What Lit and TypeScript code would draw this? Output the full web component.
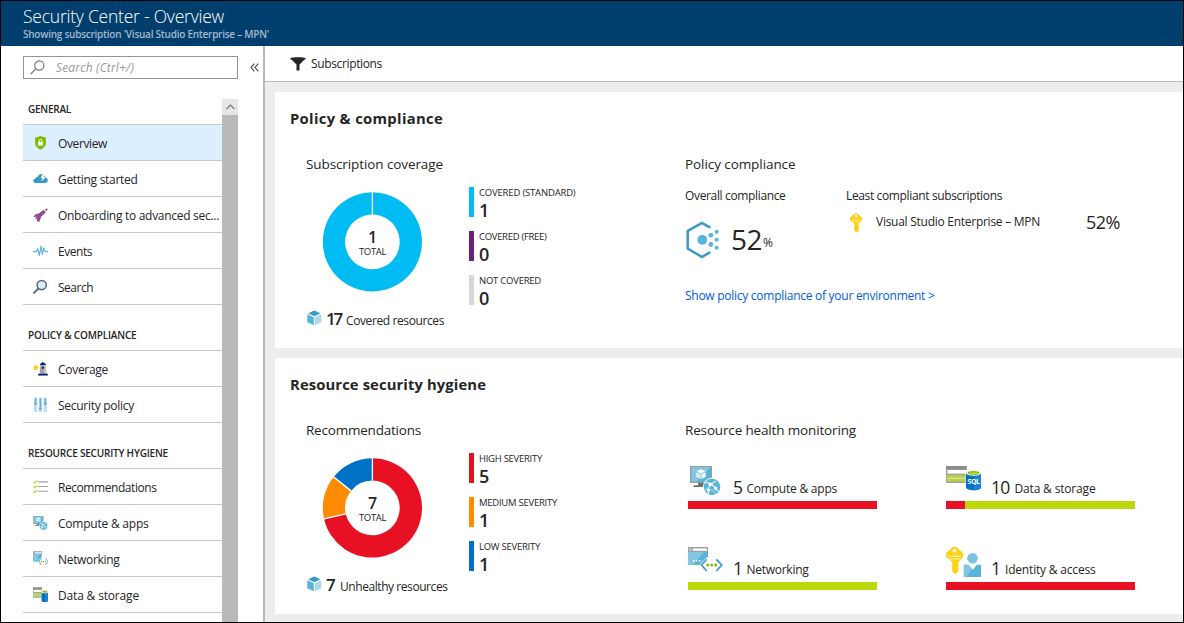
import { LitElement, html, svg, css, nothing } from "lit";
import { customElement, property } from "lit/decorators.js";

/** Single-line label whose tracking adapts to a given measure. */
@customElement("fit-label")
class FitLabel extends LitElement {
  @property({ type: Number }) w = 0;
  @property() text = "";
  static styles = css`
    :host { display: inline-block; white-space: pre; }
  `;
  render() {
    return html`<span>${this.text}</span>`;
  }
  updated() {
    const s = this.renderRoot.querySelector("span") as HTMLElement;
    s.style.letterSpacing = "0px";
    const natural = s.getBoundingClientRect().width;
    if (this.w && this.text.length) {
      s.style.letterSpacing = `${(this.w - natural) / this.text.length}px`;
    }
  }
}

const fit = (text: string, w: number) => html`<fit-label .text=${text} .w=${w}></fit-label>`;

const monitorArt = svg`
  <path d="M1 1h22v17H1z" fill="#9b9c9e"/>
  <path d="M2.3 2h19.5v14.6H2.3z" fill="#59b4d9"/>
  <path d="M2.3 2h19.5L8 16.6H2.3z" fill="#84c6e1"/>
  <path d="M9 18h6v2.2h3.5V22H4.5v-1.8H9z" fill="#6f7072"/>
  <path d="M12 4.3l4.6 2-4.6 2-4.6-2z" fill="#fff"/>
  <path d="M7.200 7.200l4.400 1.900v4.800l-4.400-2z" fill="#d3ecf6"/>
  <path d="M16.800 7.200l-4.400 1.900v4.800l4.400-2z" fill="#eaf6fb"/>
  <circle cx="23" cy="22" r="9.200" fill="#fff"/>
  <circle cx="23" cy="22" r="8.300" fill="#59b4d9"/>
  <path d="M16.500 17.500c4 0 9 3.500 12.500 9M19.500 29c-1.500-5 1-10 7.500-13" fill="none" stroke="#fff" stroke-width="1.200"/>
  <path d="M15.500 24.500c4-1 8 0 11.500 4.500" fill="none" stroke="#d3ecf6" stroke-width=".8"/>
  <circle cx="21.300" cy="19.300" r="1.900" fill="#fff"/><circle cx="26.700" cy="23.300" r="1.700" fill="#fff"/><circle cx="19.500" cy="25" r="1.500" fill="#fff"/>`;

const networkArt = svg`
  <path d="M0 0h20v18H0z" fill="#59b4d9"/>
  <path d="M0 0h20L5 18H0z" fill="#84c6e1"/>
  <path d="M0 0h20v5H0z" fill="#9b9c9e"/>
  <path d="M5 1.400h14v2.400H5z" fill="#fff"/>
  <circle cx="2.400" cy="2.500" r="1.300" fill="#59b4d9" stroke="#fff" stroke-width=".5"/>
  <path d="M5 13h1.500v1.500H5zM8 13h1.500v1.500H8zM11 13h1.500v1.500H11z" fill="#fff"/>
  <path d="M18.500 10.500l-7 7.500 7 8h9l7-8-7-7.500z" fill="#fff"/>
  <path d="M18.700 12.300L13.500 18l5.200 6M28.300 12.300L33.800 18l-5.500 6" fill="none" stroke="#3999c6" stroke-width="1.700"/>
  <circle cx="19.700" cy="18" r="1.500" fill="#7fba00"/><circle cx="23.700" cy="18" r="1.500" fill="#7fba00"/><circle cx="27.700" cy="18" r="1.500" fill="#7fba00"/>`;

const dataArt = svg`
  <path d="M0 0h21v17H0z" fill="#a0a1a2"/>
  <path d="M0 0h21l-3 3.500H0z" fill="#8b8c8d"/>
  <path d="M1.500 4h19v3.600h-19z" fill="#fff"/>
  <path d="M1 9h18v2.500H1zM1 13h18v2.500H1z" fill="#b8d432"/>
  <path d="M1 11.500h18V13H1z" fill="#d8e3a0"/>
  <path d="M19.500 4.500h16V24h-16z" fill="#fff"/>
  <path d="M20 7v14.500c0 1.600 3.300 2.700 7.500 2.700s7.500-1.100 7.500-2.700V7z" fill="#0072c6"/>
  <path d="M28 9v15.200c4 0 7-1.100 7-2.700V7z" fill="#1b82d0"/>
  <ellipse cx="27.500" cy="7" rx="7.500" ry="2.700" fill="#fff"/>
  <ellipse cx="27.500" cy="6.800" rx="6" ry="1.900" fill="#7fba00"/>
  <ellipse cx="27.500" cy="7.400" rx="4.500" ry="1.200" fill="#b8d432"/>`;

const keyArt = svg`
  <path d="M4.600.4h2.800L12 4.500v3L8.700 11v6.500L6.500 19.600 4.300 17.600V11L0 7.500v-3z" fill="#fcd116"/>
  <path d="M1.500 7h9M1.500 8.800h9" stroke="#fff0a8" stroke-width=".8"/>
  <circle cx="6" cy="3" r="1.300" fill="#fff"/>`;

const icons: Record<string, unknown> = {
  shield: svg`<svg class="i16" viewBox="0 0 16 16"><path d="M8 .3c1.800 1.300 3.800 1.700 5.700 1.700v6.500c0 3-2.400 5-5.700 6.700-3.300-1.700-5.700-3.700-5.700-6.700V2C4.200 2 6.200 1.600 8 .3z" fill="#7fba00"/><path d="M5.500 6.800h5v4h-5z" fill="#fff"/><path d="M6.500 7V5.700a1.500 1.500 0 013 0V7" fill="none" stroke="#fff" stroke-width="1"/></svg>`,
  cloud: svg`<svg class="i16" viewBox="0 0 16 16"><path d="M3 12.300c-1.700 0-2.700-1.100-2.700-2.400 0-1.400 1-2.400 2.400-2.500C3 6 4.200 5.600 5 5.800 5.600 3.800 7.200 2.600 9 2.600c2.400 0 4 1.600 4.200 3.900 1.600.2 2.600 1.400 2.600 2.900 0 1.700-1.200 2.900-2.900 2.900z" fill="#3999c6"/><path d="M10 2.800h3L11.500 6h2L9 10.700l1.100-3.400H8.300z" fill="#fff"/></svg>`,
  rocket: svg`<svg class="i16" viewBox="0 0 16 16"><path d="M15.700 1l-3.200.8 2.300 2.400zM11.500 2.500L6 6.500l-3.500.7L.3 10l3.200-.2L2 12.500l2.300-.4.3 2.500 2.200-.4 2.300-4.900L13.800 5z" fill="#914c94"/><path d="M11.600 2.600l2.200 2.200" stroke="#fff" stroke-width=".5"/><path d="M3.800 13.500l2.800-3 1.400 1-1.600 4.200z" fill="#914c94"/></svg>`,
  pulse: svg`<svg class="i16" viewBox="0 0 16 16"><path d="M0 8.700h3.500L5 5.500l1.700 7.500L8.500 2.700l1.300 9 1.700-7 1.300 4H16" fill="none" stroke="#59b4d9" stroke-width="1.200" stroke-linejoin="round"/></svg>`,
  search: svg`<svg class="i16" viewBox="0 0 16 16"><path d="M5.800 9.600L1 14.200" stroke="#5a6675" stroke-width="2" stroke-linecap="round"/><circle cx="9.300" cy="5.900" r="4.900" fill="#d9eef8" stroke="#5a6675" stroke-width="1.600"/></svg>`,
  tower: svg`<svg class="i16" viewBox="0 0 16 16"><path d="M8 3.500h5.200L14.300 13H7z" fill="#a0a1a2"/><path d="M11.500 3.500h1.700L14.300 13h-2.600z" fill="#c4c5c6"/><path d="M7.200 3.700c.3-1 1.200-2 2.500-2.300L10.500.3l.9 1.100c1.200.3 2.300 1.300 2.500 2.300z" fill="#0a2f7a"/><path d="M5.500 13h10.300v2H5.500z" fill="#002d6e"/><circle cx="10.600" cy="6.700" r="1.300" fill="#333"/><circle cx="2.800" cy="6.600" r="2.500" fill="#fcd116"/><path d="M3 5l3.800 1.600L3 8.200z" fill="#fcd116"/></svg>`,
  sliders: svg`<svg class="i16" viewBox="0 0 16 16"><path d="M1 0h3.500v15.500H1zM6.200 0h3.500v15.500H6.200zM11.300 0h3.500v15.500h-3.500z" fill="#b8def0"/><path d="M2 1h1.600v5H2zM7.200 1h1.600v10H7.200zM12.300 1h1.600v5h-1.600z" fill="#59b4d9"/><path d="M1 6h3.500v1.400H1zM6.200 11.500h3.500v1.400H6.200zM11.300 6h3.500v1.400h-3.500z" fill="#8a9299"/></svg>`,
  checks: svg`<svg class="i16" viewBox="0 0 16 16"><path d="M5 2.500h11M5 7.500h11M5 12.500h11" stroke="#a0a1a2" stroke-width="1.200"/><path d="M.5 2.500l1.200 1.200L4.500 1M.5 7.500l1.200 1.200L4.500 6M.5 12.500l1.200 1.200L4.500 11" fill="none" stroke="#b8d432" stroke-width="1.200"/></svg>`,
  compute: svg`<svg class="i16" viewBox="0.500 0 32 32">${monitorArt}</svg>`,
  network: svg`<svg class="i16" viewBox="0 0 32 32"><g transform="scale(.94 1.180)">${networkArt}</g></svg>`,
  data: svg`<svg class="i16" viewBox="0 0 32 32"><g transform="scale(.91 1.280)">${dataArt}</g></svg>`,
  cube: svg`<svg class="i16" viewBox="0 0 16 16"><path d="M7.800 0l6.500 3-6.500 3.100L1.300 3z" fill="#3999c6"/><path d="M.3 4l7 3.300v8.500l-7-3.400z" fill="#59b4d9"/><path d="M15.300 4l-7 3.300v8.500l7-3.400z" fill="#a9d8ec"/></svg>`,
};

const tileIcons: Record<string, unknown> = {
  compute: svg`<svg width="36" height="33" viewBox="-1 0 36 33">${monitorArt}</svg>`,
  network: svg`<svg width="36" height="33" viewBox="0 -1 36 33">${networkArt}</svg>`,
  data: svg`<svg width="36" height="33" viewBox="0 -1 36 33">${dataArt}<text class="sql" x="21.500" y="17.600" textLength="12.500">SQL</text></svg>`,
  identity: svg`<svg width="36" height="33" viewBox="0 -1 36 33"><g transform="translate(.2 -.5) scale(1.400 1.420)">${keyArt}</g><circle cx="26.500" cy="11.300" r="5.300" fill="#7ac3e3"/><path d="M24 15.800c3 1.500 6.300 0 7.300-2a5.300 5.300 0 01-7.300 2z" fill="#59b4d9"/><path d="M17.800 17.800h4.700l4.300 5 4-5H35V30H17.800z" fill="#59b4d9"/><path d="M17.800 17.800h4.700l3.300 4-5.500 8.200h-2.500z" fill="#84c6e1"/></svg>`,
};

const nav = [
  { title: "GENERAL", w: 43, items: [
    ["shield", "Overview", 49], ["cloud", "Getting started", 79.500], ["rocket", "Onboarding to advanced sec...", 161],
    ["pulse", "Events", 34], ["search", "Search", 35]] },
  { title: "POLICY & COMPLIANCE", w: 108.500, items: [["tower", "Coverage", 50], ["sliders", "Security policy", 76]] },
  { title: "RESOURCE SECURITY HYGIENE", w: 140, items: [
    ["checks", "Recommendations", 98.500], ["compute", "Compute & apps", 90.500], ["network", "Networking", 61.500], ["data", "Data & storage", 81]] },
] as { title: string; w: number; items: [string, string, number][] }[];

type Slice = { label: string; w: number; value: number; color: string };
const coverage: Slice[] = [
  { label: "COVERED (STANDARD)", w: 96.500, value: 1, color: "#00bcf2" },
  { label: "COVERED (FREE)", w: 67.500, value: 0, color: "#68217a" },
  { label: "NOT COVERED", w: 62, value: 0, color: "#d6d7d8" },
];
const severity: Slice[] = [
  { label: "HIGH SEVERITY", w: 63, value: 5, color: "#e81123" },
  { label: "MEDIUM SEVERITY", w: 78, value: 1, color: "#ff8c00" },
  { label: "LOW SEVERITY", w: 61, value: 1, color: "#0072c6" },
];
const tiles = [
  { icon: "compute", n: "5", nw: 9.500, gap: 4, label: "Compute & apps", w: 90.500, bad: 100 },
  { icon: "data", n: "10", nw: 18.500, gap: 5, label: "Data & storage", w: 81, bad: 10 },
  { icon: "network", n: "1", nw: 9.500, gap: 4, label: "Networking", w: 62, bad: 0 },
  { icon: "identity", n: "1", nw: 9.500, gap: 4.500, label: "Identity & access", w: 90.500, bad: 100 },
];

@customElement("app-root")
class AppRoot extends LitElement {
  static styles = css`
    :host {
      display: block; box-sizing: border-box; width: 1184px; height: 623px; overflow: hidden;
      border: 1px solid #000; background: #fff; color: #252525;
      font: 12px/18px "Open Sans", "Noto Sans", sans-serif;
    }
    * { box-sizing: border-box; }
    svg { display: block; flex: none; }
    h1, h2, h3, h4, p { margin: 0; font-weight: 400; }
    .page { display: flex; flex-direction: column; height: 100%; }
    header { flex: none; height: 45px; background: #003e6e; padding: 4px 0 0 22px; color: #fff; }
    .title { font-size: 17.500px; font-weight: 300; line-height: 23px; }
    .sub { font-size: 10px; font-weight: 600; line-height: 12px; color: #a6b9cb; }
    .body { flex: 1; min-height: 0; display: flex; }
    aside { flex: none; width: 264px; border-right: 2px solid #bababa; padding: 10px 0 0 22px; display: flex; flex-direction: column; }
    .find { display: flex; align-items: center; height: 23px; flex: none; }
    .box { width: 215px; height: 23px; border: 1px solid #949494; display: flex; align-items: center; padding-left: 6px; gap: 11px; color: #999; font-style: italic; }
    .fold { margin-left: 12px; }
    .scroll { flex: 1; min-height: 0; margin-top: 20px; display: flex; width: 215px; overflow: hidden; }
    nav { width: 199px; flex: none; }
    .group { height: 26px; border-bottom: 1px solid #c8c8c8; padding-left: 5px; font-size: 10px; font-weight: 600; line-height: 21px; }
    .group:not(:first-child) { margin-top: 20px; }
    .item { height: 36px; border-bottom: 1px solid #c8c8c8; display: flex; align-items: center; padding: 2px 0 0 10px; gap: 10px; }
    .item.on { background: #dceffe; }
    .item .i16 { margin-top: -2px; }
    .i16 { width: 15px; height: 16px; }
    .bar { width: 16px; background: #b9b9b9; }
    .up { height: 16px; background: #e6e6e6; display: flex; align-items: center; justify-content: center; }
    main { flex: 1; min-width: 0; background: #ededed; display: flex; flex-direction: column; }
    .tools { flex: none; height: 36px; background: #fff; border-bottom: 1px solid #bababa; display: flex; align-items: center; padding-left: 25px; gap: 5px; }
    .cards { padding: 10px 0 0 10px; display: grid; gap: 10px; }
    .card { height: 256px; background: #fff; padding: 16px 0 0 15px; }
    h2 { font-size: 14.800px; font-weight: 700; line-height: 20px; }
    .cols { display: grid; grid-template-columns: 379px 1fr; padding: 26px 0 0 16px; }
    h3 { font-size: 13.500px; line-height: 20px; }
    .chart { display: flex; padding: 13px 0 0 16px; }
    .donut { margin-top: 5px; width: 100px; height: 100px; display: grid; }
    .donut > * { grid-area: 1 / 1; }
    .total { display: flex; flex-direction: column; align-items: center; padding: 36px 0 0 1px; }
    .total b { font-size: 16px; font-weight: 600; line-height: 18px; }
    .total span { font-size: 9.500px; line-height: 12px; }
    .legend { margin-left: 47px; display: grid; gap: 14px; }
    .key { height: 30px; border-left: 5px solid; padding-left: 5px; }
    .key div { color: #252525; font-size: 9.500px; line-height: 11px; }
    .key b { display: block; color: #252525; font-size: 18px; font-weight: 600; line-height: 24px; }
    .res { display: flex; padding: 4px 0 0 1px; height: 24px; }
    .res .i16 { margin-top: 1px; }
    .res b { font-size: 17px; font-weight: 600; line-height: 20px; margin: 0 5px 0 4px; }
    .res span { line-height: 24px; }
    .pol { display: grid; grid-template-columns: 161px 1fr; padding-top: 13px; height: 113px; }
    .overall { display: flex; padding: 16px 0 0 1px; }
    .overall b { font-size: 28px; font-weight: 400; line-height: 36px; margin-left: 11px; }
    .overall span { font-size: 12px; line-height: 44px; margin-left: 1px; }
    .least { display: flex; padding: 8px 0 0 4px; align-items: flex-start; }
    .least p { margin-left: 14px; width: 210px; }
    .least b { font-size: 18px; font-weight: 400; line-height: 18px; }
    .link { color: #015cda; }
    .tiles { display: grid; grid-template-columns: 189px 189px; column-gap: 69px; row-gap: 36px; padding: 24px 0 0 3px; }
    .tile { height: 45px; display: flex; flex-direction: column; justify-content: space-between; }
    .top { display: flex; height: 34px; }
    .top svg { margin-top: 1px; }
    .n { font-size: 17.500px; line-height: 47px; margin-left: 9px; }
    .l { line-height: 49px; }
    .meter { height: 8px; background: #bad80a; }
    .meter div { height: 8px; background: #e81123; }
    .sql { font: 700 7px "Open Sans", sans-serif; fill: #fff; }
  `;

  donut(slices: Slice[]) {
    const total = slices.reduce((a, s) => a + s.value, 0);
    const cx = 50.400, cy = 49.900, R = 49.600, r = 27.300;
    const pt = (rad: number, t: number) =>
      `${cx + rad * Math.sin(t * 2 * Math.PI)} ${cy - rad * Math.cos(t * 2 * Math.PI)}`;
    let acc = 0;
    const edges: number[] = [];
    const arcs = slices.filter((s) => s.value).map((s) => {
      const a = acc / total;
      acc += s.value;
      const b = Math.min(acc / total, a + 0.99999);
      const big = b - a > 0.5 ? 1 : 0;
      edges.push(a);
      return svg`<path fill=${s.color} d="M${pt(R, a)}A${R} ${R} 0 ${big} 1 ${pt(R, b)}L${pt(r, b)}A${r} ${r} 0 ${big} 0 ${pt(r, a)}Z"/>`;
    });
    return html`<div class="donut">
      <svg width="100" height="100">${arcs}${edges.map((e) => svg`<path d="M${pt(r, e)}L${pt(R + 1, e)}" stroke="#fff" stroke-width="1.300"/>`)}</svg>
      <div class="total"><b>${total}</b><span>${fit("TOTAL", 27)}</span></div>
    </div>`;
  }

  chart(title: string, tw: number, slices: Slice[], n: string, nw: number, res: string, rw: number) {
    return html`<div>
      <h3>${fit(title, tw)}</h3>
      <div class="chart">${this.donut(slices)}
        <div class="legend">${slices.map((s) => html`<div class="key" style="border-color:${s.color}"><div>${fit(s.label, s.w)}</div><b>${s.value}</b></div>`)}</div>
      </div>
      <div class="res">${icons.cube}<b>${fit(n, nw)}</b><span>${fit(res, rw)}</span></div>
    </div>`;
  }

  render() {
    return html`<div class="page">
      <header>
        <h1 class="title">${fit("Security Center - Overview", 201)}</h1>
        <p class="sub">${fit("Showing subscription 'Visual Studio Enterprise – MPN'", 246)}</p>
      </header>
      <div class="body">
        <aside>
          <div class="find">
            <div class="box"><svg width="15" height="15" viewBox="0 0 15 15" fill="none" stroke="#7a7a7a" stroke-width="1.200"><circle cx="9.300" cy="5.500" r="4.600"/><path d="M6 8.800L.7 14"/></svg>${fit("Search (Ctrl+/)", 78)}</div>
            <svg class="fold" width="9" height="9" viewBox="0 0 9 9" fill="none" stroke="#444" stroke-width="1.100"><path d="M4.300.7L1 4.500l3.300 3.800M8.300.7L5 4.500l3.300 3.800"/></svg>
          </div>
          <div class="scroll">
            <nav>${nav.map((g, gi) => html`<div class="group">${fit(g.title, g.w)}</div>
              ${g.items.map(([ic, label, w], i) => html`<div class="item ${gi + i === 0 ? "on" : ""}">${icons[ic]}${fit(label, w)}</div>`)}`)}</nav>
            <div class="bar"><div class="up"><svg width="9" height="6" viewBox="0 0 9 6" fill="none" stroke="#777" stroke-width="1.100"><path d="M.5 5L4.500 1l4 4"/></svg></div></div>
          </div>
        </aside>
        <main>
          <div class="tools"><svg width="16" height="14" viewBox="0 0 16 14"><path d="M.3 1.500C.3.700 3.800.2 8 .2s7.700.5 7.700 1.300c0 .6-.8 1-1.700 1.600L9.500 7.500v6h-3v-6L2 3.100C1.100 2.500.3 2.100.3 1.500z" fill="#252525"/></svg>${fit("Subscriptions", 71)}</div>
          <div class="cards">
            <section class="card">
              <h2>${fit("Policy & compliance", 153)}</h2>
              <div class="cols">
                ${this.chart("Subscription coverage", 137, coverage, "17", 15, "Covered resources", 98)}
                <div>
                  <h3>${fit("Policy compliance", 110.500)}</h3>
                  <div class="pol">
                    <div><h4>${fit("Overall compliance", 100.500)}</h4>
                      <div class="overall"><svg width="34" height="38" viewBox="0 0 34 38"><path d="M24.300 6.700L16 2 1.700 10v17.500L16 36l8.300-5" fill="none" stroke="#3999c6" stroke-width="2.500"/><g fill="#59b4d9"><circle cx="16.300" cy="18.800" r="4.900"/><circle cx="24.800" cy="14.200" r="2.400"/><circle cx="24.800" cy="23.500" r="2.400"/><circle cx="30.600" cy="10.800" r="2"/><circle cx="30.600" cy="18.800" r="2"/><circle cx="30.600" cy="26.800" r="2"/></g></svg>
                        <b>${fit("52", 31)}</b><span>${fit("%", 10)}</span></div></div>
                    <div><h4>${fit("Least compliant subscriptions", 156)}</h4>
                      <div class="least"><svg width="12" height="20" viewBox="0 0 12 20">${keyArt}</svg><p>${fit("Visual Studio Enterprise – MPN", 164)}</p><b>${fit("52%", 34)}</b></div></div>
                  </div>
                  <p class="link">${fit("Show policy compliance of your environment >", 249.500)}</p>
                </div>
              </div>
            </section>
            <section class="card">
              <h2>${fit("Resource security hygiene", 196)}</h2>
              <div class="cols">
                ${this.chart("Recommendations", 115, severity, "7", 9, "Unhealthy resources", 107.500)}
                <div>
                  <h3>${fit("Resource health monitoring", 171)}</h3>
                  <div class="tiles">${tiles.map((t) => html`<div class="tile">
                    <div class="top">${tileIcons[t.icon]}<span class="n">${fit(t.n, t.nw)}</span><span class="l" style="margin-left:${t.gap}px">${fit(t.label, t.w)}</span></div>
                    <div class="meter">${t.bad ? html`<div style="width:${t.bad}%"></div>` : nothing}</div>
                  </div>`)}</div>
                </div>
              </div>
            </section>
          </div>
        </main>
      </div>
    </div>`;
  }
}
